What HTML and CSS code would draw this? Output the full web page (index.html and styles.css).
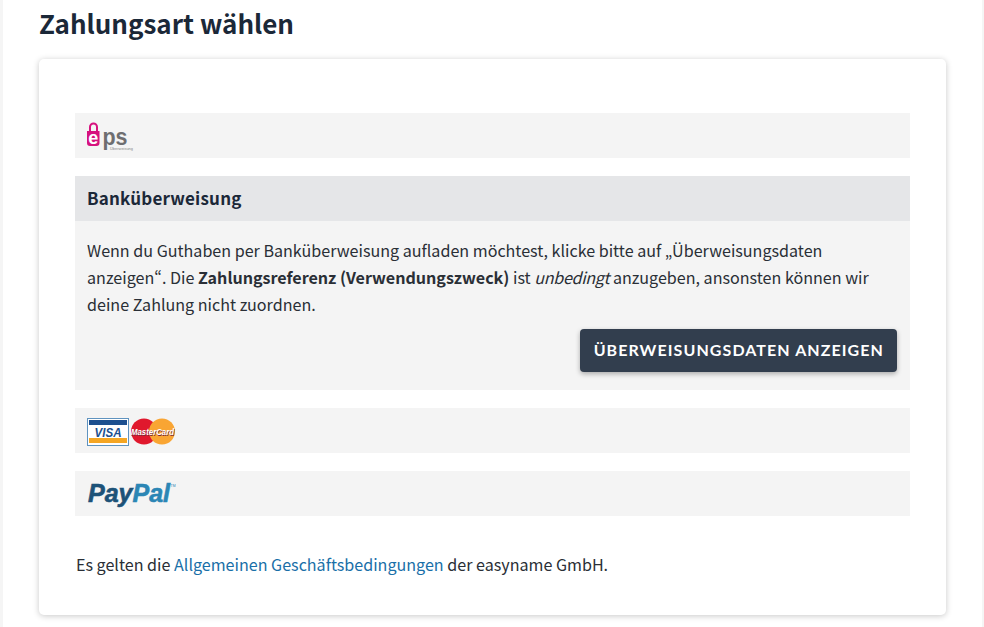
FILE: index.html
```html
<!DOCTYPE html>
<html lang="de">
<head>
    <meta charset="UTF-8">
    <title>Zahlungsart wählen</title>
    <link rel="stylesheet" href="styles.css">
</head>
<body>
    <div class="wrap">
        <h1>Zahlungsart wählen</h1>
        <div class="card">
            <div class="method">
                <svg class="logo" width="60" height="45" viewBox="0 0 60 45">
                    <path d="M3 19 V14 a3.500 3.500 0 0 1 7 0 V19" fill="none" stroke="#d6127e" stroke-width="2"/>
                    <path d="M0 18 H12.500 V30 a3 3 0 0 1 -3 3 H3 a3 3 0 0 1 -3 -3 Z" fill="#d6127e"/>
                    <text class="eps-e" x="6.200" y="30.500">e</text>
                    <text class="eps-ps" x="15.500" y="32" textLength="25" lengthAdjust="spacingAndGlyphs">ps</text>
                    <text class="eps-sub" x="23" y="37" textLength="23" lengthAdjust="spacingAndGlyphs">Überweisung</text>
                </svg>
            </div>

            <div class="method-head">Banküberweisung</div>
            <div class="method-body">
                <p>Wenn du Guthaben per Banküberweisung aufladen möchtest, klicke bitte auf „Überweisungsdaten anzeigen“. Die <b>Zahlungsreferenz (Verwendungszweck)</b> ist <i>unbedingt</i> anzugeben, ansonsten können wir deine Zahlung nicht zuordnen.</p>
                <div class="btn-row">
                    <a class="btn" href="#">Überweisungsdaten anzeigen</a>
                </div>
            </div>

            <div class="method">
                <svg class="logo" width="100" height="45" viewBox="0 0 100 45">
                    <rect x="0.500" y="10.500" width="41" height="27" fill="#fff" stroke="#5f93bf"/>
                    <rect x="2" y="12" width="38" height="5" fill="#1c4f8f"/>
                    <rect x="2" y="30" width="38" height="5" fill="#f5a623"/>
                    <text class="visa" x="7.500" y="28.500" textLength="27" lengthAdjust="spacingAndGlyphs">VISA</text>
                    <circle cx="57" cy="23.500" r="13" fill="#e0182d"/>
                    <circle cx="75" cy="23.500" r="13" fill="#f9a533"/>
                    <text class="mc-shadow" x="44.500" y="27.500" textLength="43" lengthAdjust="spacingAndGlyphs">MasterCard</text>
                    <text class="mc" x="44" y="27" textLength="43" lengthAdjust="spacingAndGlyphs">MasterCard</text>
                </svg>
            </div>

            <div class="method">
                <svg class="logo" width="100" height="45" viewBox="0 0 100 45">
                    <text class="pp" x="1" y="31" textLength="82" lengthAdjust="spacingAndGlyphs"><tspan class="pp-pay">Pay</tspan><tspan class="pp-pal">Pal</tspan></text>
                    <text class="pp-tm" x="83.500" y="16">TM</text>
                </svg>
            </div>

            <p class="terms">Es gelten die <a href="#">Allgemeinen Geschäftsbedingungen</a> der easyname GmbH.</p>
        </div>
    </div>
</body>
</html>
```

FILE: styles.css
```css
*{margin:0; padding:0; box-sizing:border-box;}
html,body{
    height: 100%;
    overflow: hidden;
}
body{
    background: #f5f5f5;
    font-family: "Noto Sans CJK SC", "Noto Sans", sans-serif;
    font-variant-east-asian: proportional-width;
    font-size: 16.100px;
    line-height: 27px;
    color: #2a2f36;
}
.wrap{
    width: 979px;
    height: 627px;
    margin-left: 3px;
    padding: 0 36px;
    background: #fff;
}
.wrap h1{
    height: 59px;
    padding-top: 4px;
    font-size: 26px;
    line-height: 38px;
    font-weight: 600;
    color: #1b2838;
}
.card{
    width: 907px;
    height: 556px;
    padding: 54px 36px 0;
    background: #fff;
    border-radius: 5px;
    box-shadow: 0 1px 6px rgba(0,0,0,.22);
}
.method{
    display: flex;
    align-items: center;
    height: 45px;
    margin-bottom: 18px;
    padding: 0 12px;
    background: #f4f4f4;
}
.method-head{
    height: 45px;
    padding: 0 12px;
    background: #e5e6e8;
    font-size: 17px;
    line-height: 44px;
    font-weight: 600;
    letter-spacing: .2px;
    color: #1b2838;
}
.method-body{
    height: 169px;
    margin-bottom: 18px;
    padding: 16px 13px 0 12px;
    background: #f4f4f4;
}
.method-body b{
    letter-spacing: -.02px;
}
.method-body i{
    letter-spacing: -.3px;
}
.btn-row{
    display: flex;
    justify-content: flex-end;
    margin-top: 11px;
}
.btn{
    height: 43px;
    padding: 0 13px 0 14px;
    background: #323e4e;
    border-radius: 4px;
    box-shadow: 0 2px 5px rgba(0,0,0,.3);
    color: #fff;
    font-family: Lato, sans-serif;
    font-size: 16px;
    line-height: 42px;
    font-weight: 700;
    letter-spacing: 1.080px;
    text-transform: uppercase;
    text-decoration: none;
}
.terms{
    margin: 35px 0 0 1px;
}
.terms a{
    color: #1a6fa8;
    text-decoration: none;
}
.logo text{
    font-family: "Liberation Sans", sans-serif;
}
.logo .eps-e{
    font-size: 18px;
    font-weight: 700;
    fill: #fff;
    text-anchor: middle;
}
.logo .eps-ps{
    font-size: 23px;
    font-weight: 700;
    fill: #6e6e70;
}
.logo .eps-sub{
    font-size: 3.500px;
    fill: #888;
}
.logo .visa{
    font-size: 13px;
    font-weight: 700;
    font-style: italic;
    fill: #1c4f8f;
}
.logo .mc,
.logo .mc-shadow{
    font-size: 9px;
    font-weight: 700;
    font-style: italic;
    fill: #fff;
}
.logo .mc-shadow{
    fill: #7a2a3a;
}
.logo .pp{
    font-size: 25px;
    font-weight: 700;
    font-style: italic;
}
.logo .pp-pay{
    fill: #1d5278;
    stroke: #1d5278;
    stroke-width: .6px;
}
.logo .pp-pal{
    fill: #2b86b5;
    stroke: #2b86b5;
    stroke-width: .6px;
}
.logo .pp-tm{
    font-size: 3.500px;
    fill: #2b86b5;
}
```
